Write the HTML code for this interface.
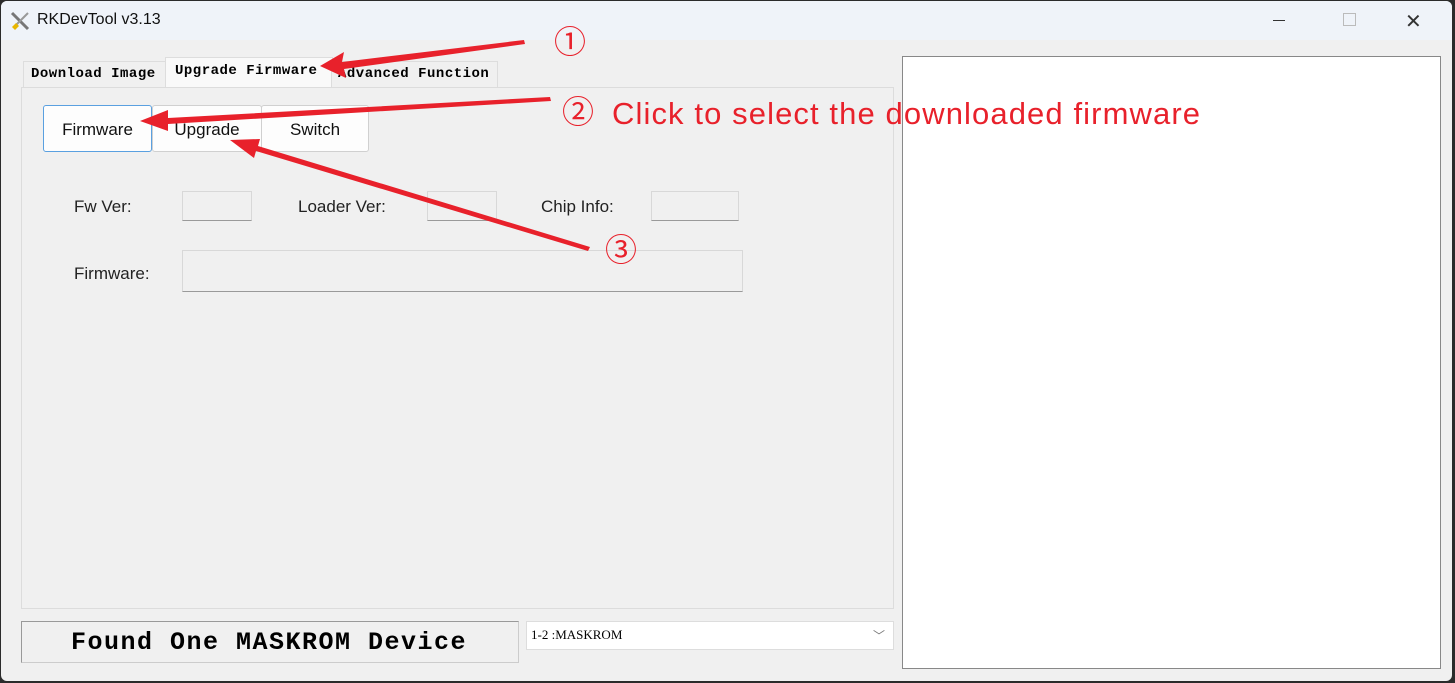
<!DOCTYPE html><html><head><style>
body{margin:0;width:1455px;height:683px;overflow:hidden;background:#2b2b2b;font-family:"Liberation Sans",sans-serif;position:relative}
.win{position:absolute;left:1px;top:1px;width:1451px;height:680px;background:#f0f0f0;border-radius:6px;overflow:hidden}
.tb{position:absolute;left:0;top:0;width:100%;height:39px;background:#eff3f9}
.a{position:absolute}
.mono{font-family:"Liberation Serif",serif;font-weight:bold}
.btn{position:absolute;top:104px;height:47px;background:#fdfdfd;border:1px solid #d0d0d0;border-radius:3px;font-size:17px;text-align:center;line-height:47px;color:#111;box-sizing:border-box}
.lbl{position:absolute;font-size:17px;color:#222}
.box{position:absolute;background:#f0f0f0;border:1px solid #d8d8d8;border-bottom-color:#9a9a9a}
</style></head><body>
<div class="win">
<div class="tb"></div>
<svg class="a" style="left:8px;top:9px" width="22" height="22"><path d="M3 3 L19 19" stroke="#777" stroke-width="3"/><path d="M19 3 L5 17" stroke="#999" stroke-width="2"/><path d="M3 17 l4 -4 3 3 -4 4z" fill="#e8b600"/></svg>
<div class="a" style="left:36px;top:10px;font-size:16px;color:#111">RKDevTool v3.13</div>
<div class="a" style="left:1272px;top:19px;width:12px;height:1px;background:#333"></div>
<div class="a" style="left:1342px;top:12px;width:11px;height:11px;border:1px solid #bbb"></div>
<div class="a" style="left:1404px;top:8px;font-size:20px;color:#333">✕</div>
<div class="a" style="left:22px;top:60px;width:142px;height:26px;border:1px solid #ddd;border-bottom:none;background:#f0f0f0"></div>
<div class="a mono" style="left:30px;top:65px;font-size:14px;font-family:'Liberation Mono',monospace;letter-spacing:0.5px">Download Image</div>
<div class="a" style="left:164px;top:56px;width:166px;height:31px;border:1px solid #ddd;border-bottom:none;background:#f9f9f9"></div>
<div class="a mono" style="left:174px;top:62px;font-size:14px;font-family:'Liberation Mono',monospace;letter-spacing:0.5px">Upgrade Firmware</div>
<div class="a" style="left:330px;top:60px;width:165px;height:26px;border:1px solid #ddd;border-bottom:none;background:#f0f0f0"></div>
<div class="a mono" style="left:337px;top:65px;font-size:14px;font-family:'Liberation Mono',monospace;letter-spacing:0.5px">Advanced Function</div>
<div class="a" style="left:20px;top:86px;width:871px;height:520px;border:1px solid #dcdcdc;background:#f0f0f0"></div>
<div class="btn" style="left:42px;width:109px;border:1px solid #5aa0e0">Firmware</div>
<div class="btn" style="left:151px;width:110px">Upgrade</div>
<div class="btn" style="left:260px;width:108px">Switch</div>
<div class="lbl" style="left:73px;top:196px">Fw Ver:</div>
<div class="box" style="left:181px;top:190px;width:68px;height:28px"></div>
<div class="lbl" style="left:297px;top:196px">Loader Ver:</div>
<div class="box" style="left:426px;top:190px;width:68px;height:28px"></div>
<div class="lbl" style="left:540px;top:196px">Chip Info:</div>
<div class="box" style="left:650px;top:190px;width:86px;height:28px"></div>
<div class="lbl" style="left:73px;top:263px">Firmware:</div>
<div class="box" style="left:181px;top:249px;width:559px;height:40px"></div>
<div class="a" style="left:20px;top:620px;width:496px;height:40px;border:1px solid #ccc;border-top-color:#999;border-left-color:#999;background:#f0f0f0"></div>
<div class="a mono" style="left:70px;top:627px;font-size:25px;font-family:'Liberation Mono',monospace;letter-spacing:1.5px">Found One MASKROM Device</div>
<div class="a" style="left:525px;top:620px;width:366px;height:27px;border:1px solid #ddd;background:#fff"></div>
<div class="a" style="left:530px;top:626px;font-size:13px;font-family:'Liberation Serif',serif">1-2 :MASKROM</div>
<div class="a" style="left:872px;top:626px;font-size:12px;color:#777">﹀</div>
<div class="a" style="left:901px;top:55px;width:537px;height:611px;border:1px solid #888;background:#fff"></div>
</div>
<svg class="a" style="left:0;top:0" width="1455" height="683">
<g fill="#e8212b">
<polygon points="524,40 342,62 344,52 320,66 346,78 344,69 525,44"/>
<polygon points="550,97 168,118 168,110 140,121 168,131 168,124 551,101"/>
<polygon points="590,247 258,146 260,139 230,140 254,158 256,151 588,251"/>
</g>
<g font-family="'Liberation Sans','Noto Sans CJK SC',sans-serif" fill="#e8212b">
<text x="554" y="53" font-size="32">①</text>
<text x="562" y="123" font-size="32">②</text>
<text x="605" y="261" font-size="32">③</text>
<text x="612" y="124" font-size="31" letter-spacing="1.1">Click to select the downloaded firmware</text>
</g>
</svg>
</body></html>
